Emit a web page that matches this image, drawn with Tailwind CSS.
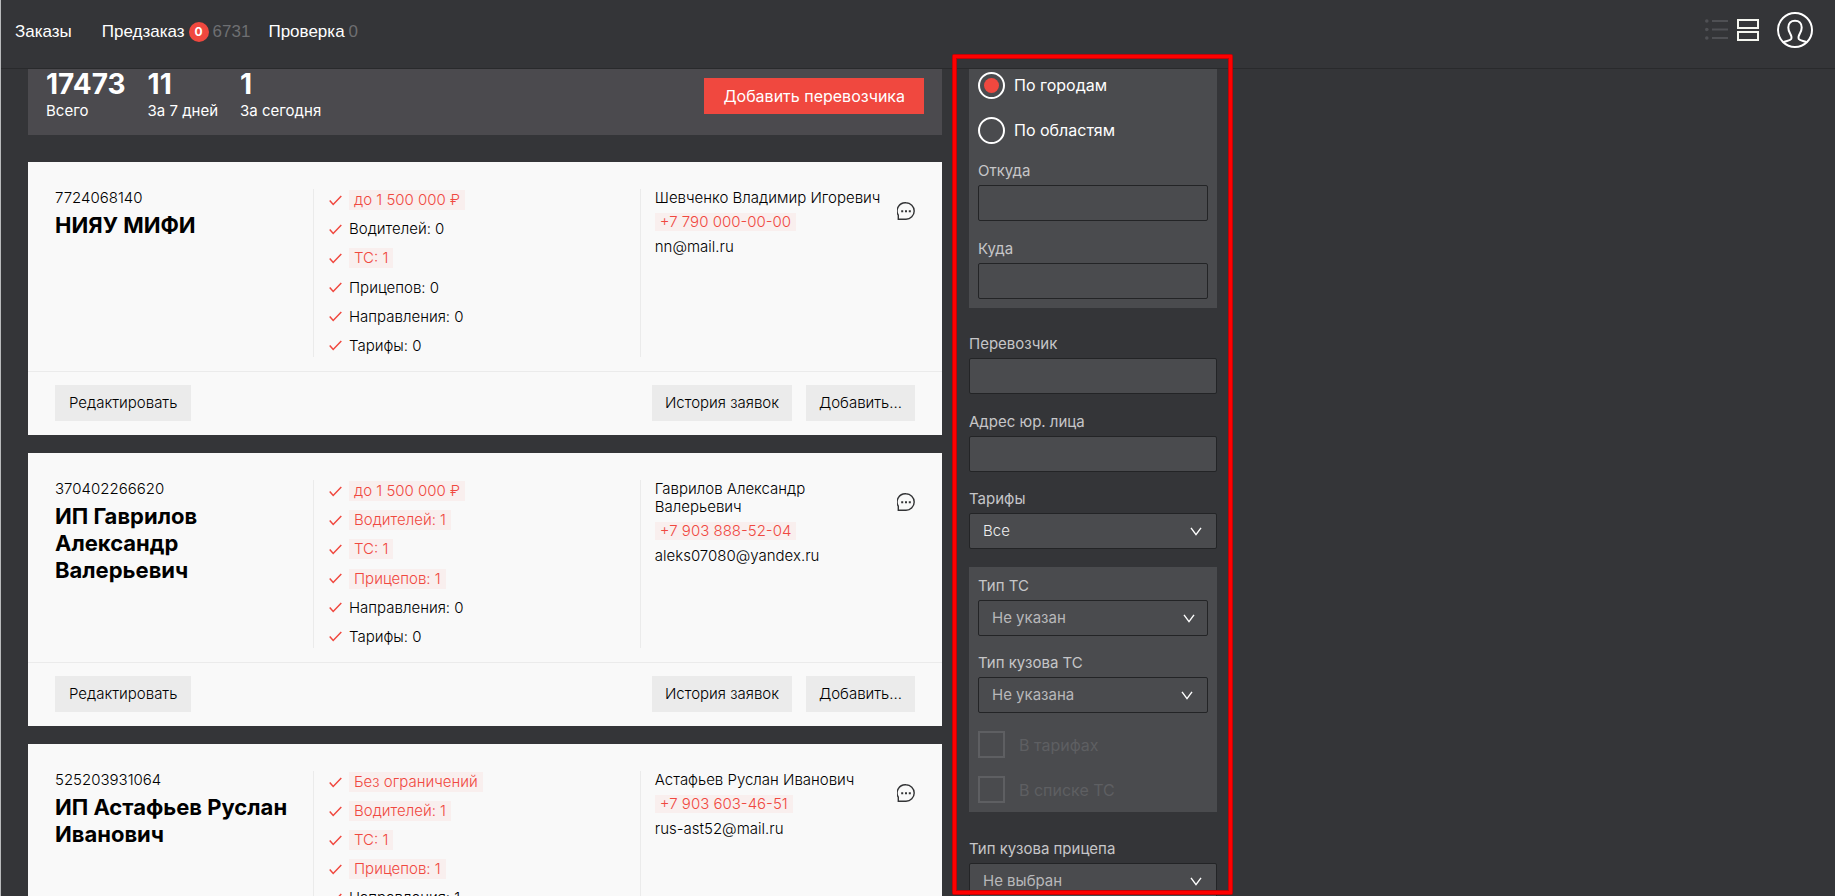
<!DOCTYPE html>
<html lang="ru">
<head>
<meta charset="utf-8">
<meta name="viewport" content="width=device-width, initial-scale=1">
<title>Перевозчики</title>
<script src="https://cdn.jsdelivr.net/npm/@tailwindcss/browser@4"></script>
</head>
<body class="bg-[#343538]">
<svg class="hidden" aria-hidden="true">
  <symbol id="check" viewBox="0 0 13 11"><path d="M.7 5.4 4.2 9.5 12.3 1" fill="none" stroke="#f0483f" stroke-width="1.5"/></symbol>
  <symbol id="chat" viewBox="0 0 18 18"><path d="M9 .8A8.2 8.2 0 1 1 9 17.2H1.3V13.2A8.2 8.2 0 0 1 9 .8Z" fill="none" stroke="#333436" stroke-width="1.4"/><path d="M4.2 8.2h2v2h-2zM8 8.2h2v2H8zM11.8 8.2h2v2h-2z" fill="#333436"/></symbol>
  <symbol id="chevron" viewBox="0 0 12 9"><path d="M1 .8 6 7.6 11 .8" fill="none" stroke="#fff" stroke-width="1.4"/></symbol>
</svg>
<div class="flex h-screen flex-col overflow-hidden border-l border-[#b9babc] font-['Inter',sans-serif] text-[15px] leading-[18px] font-light text-black">

  <header class="flex h-[69px] shrink-0 items-center justify-between border-b border-[#292a2c] pr-[22px] pb-[8px] pl-[14px] font-['Liberation_Sans',sans-serif] text-[17px] font-normal text-white">
    <nav class="flex items-center pt-[3px]">
      <a href="#" class="mr-[30px]">Заказы</a>
      <a href="#" class="mr-[18px] flex items-center gap-[4px]">Предзаказ
        <span class="flex size-5 items-center justify-center rounded-full bg-[#f0483f] font-['Inter',sans-serif] text-xs font-bold">0</span>
        <span class="text-[#6e6f72]">6731</span></a>
      <a href="#" class="flex items-center gap-[4px]">Проверка <span class="text-[#6e6f72]">0</span></a>
    </nav>
    <div class="flex items-center">
      <button type="button" aria-label="Список" class="mr-[9px]"><svg class="block h-[22px] w-[23px]" viewBox="0 0 23 22" fill="none" stroke="#4f5054" stroke-width="2"><path d="M7 2H23M7 10.5H23M7 19H23"/><g fill="#4f5054" stroke="none"><circle cx="1.8" cy="2" r="1.8"/><circle cx="1.8" cy="10.5" r="1.8"/><circle cx="1.8" cy="19" r="1.8"/></g></svg></button>
      <button type="button" aria-label="Карточки" class="mr-[18px]"><svg class="block size-[22px]" viewBox="0 0 22 22" fill="none" stroke="#f4f5ef" stroke-width="2"><path d="M1 1H21V9H1zM1 13H21V21H1z"/></svg></button>
      <button type="button" aria-label="Профиль"><svg class="block size-9" viewBox="0 0 36 36" fill="none" stroke="#fff" stroke-width="2"><circle cx="18" cy="18" r="17"/><path d="M6 30.5C8.5 28.8 13 29 14.2 27 15 25.5 14.2 23.4 13 21.3 11.8 19.2 11.3 17.5 11.3 15.5 11.3 11.3 14 8.7 18 8.7S24.700 11.3 24.700 15.5C24.700 17.5 24.200 19.200 23 21.300 21.800 23.400 21 25.500 21.800 27 23 29 27.500 28.800 30 30.500"/></svg></button>
    </div>
  </header>

  <div class="grid min-h-0 flex-1 grid-cols-[minmax(0,914fr)_248px_minmax(0,591fr)] grid-rows-[minmax(0,1fr)] gap-x-[27px] pl-[27px]">
    <main class="flex flex-col overflow-hidden">
      <section class="mb-[27px] flex shrink-0 items-start justify-between bg-[#4b4a4e] pt-px pr-[18px] pb-[15px] pl-[18px] font-normal text-white">
        <dl class="flex gap-[22px]">
          <div class="flex flex-col-reverse gap-1"><dt>Всего</dt><dd class="text-[28px] leading-7 font-bold">17473</dd></div>
          <div class="flex flex-col-reverse gap-1"><dt>За 7 дней</dt><dd class="text-[28px] leading-7 font-bold">11</dd></div>
          <div class="flex flex-col-reverse gap-1"><dt>За сегодня</dt><dd class="text-[28px] leading-7 font-bold">1</dd></div>
        </dl>
        <button type="button" class="mt-2 h-9 bg-[#f0483f] px-[19px] text-base">Добавить перевозчика</button>
      </section>

      <div class="flex shrink-0 flex-col gap-[18px]">
        <article class="bg-[#f9f9f9]">
          <div class="flex px-[27px] pt-[27px] pb-[14px]">
            <div class="w-[30%] pr-3"><p>7724068140</p><h2 class="mt-[5px] text-[22px] leading-[27px] font-bold">НИЯУ МИФИ</h2></div>
            <ul class="flex min-h-[168px] w-[38%] flex-col justify-between border-l border-[#ebebeb] py-px pl-[15px]">
              <li class="flex h-5 items-center gap-[7px]"><svg class="h-[11px] w-[13px]"><use href="#check"/></svg><span class="bg-[#f9efee] px-[5px] py-px text-[#f0483f]">до 1 500 000 ₽</span></li>
              <li class="flex h-5 items-center gap-[7px]"><svg class="h-[11px] w-[13px]"><use href="#check"/></svg>Водителей: 0</li>
              <li class="flex h-5 items-center gap-[7px]"><svg class="h-[11px] w-[13px]"><use href="#check"/></svg><span class="bg-[#f9efee] px-[5px] py-px text-[#f0483f]">ТС: 1</span></li>
              <li class="flex h-5 items-center gap-[7px]"><svg class="h-[11px] w-[13px]"><use href="#check"/></svg>Прицепов: 0</li>
              <li class="flex h-5 items-center gap-[7px]"><svg class="h-[11px] w-[13px]"><use href="#check"/></svg>Направления: 0</li>
              <li class="flex h-5 items-center gap-[7px]"><svg class="h-[11px] w-[13px]"><use href="#check"/></svg>Тарифы: 0</li>
            </ul>
            <div class="flex w-[32%] items-start justify-between gap-3 border-l border-[#ebebeb] pl-[14px]">
              <div><p>Шевченко Владимир Игоревич</p><a href="tel:+77900000000" class="mt-[6px] mb-[7px] block w-fit bg-[#f9efee] px-[5px] text-[#f0483f]">+7 790 000-00-00</a><p>nn@mail.ru</p></div>
              <button type="button" aria-label="Комментарии" class="mt-[13px] shrink-0"><svg class="block size-[18px]"><use href="#chat"/></svg></button>
            </div>
          </div>
          <footer class="flex gap-[14px] border-t border-[#ebebeb] px-[27px] pt-[13px] pb-[14px]">
            <button type="button" class="mr-auto h-9 bg-[#ebebeb] px-[14px]">Редактировать</button>
            <button type="button" class="h-9 bg-[#ebebeb] px-[13px]">История заявок</button>
            <button type="button" class="h-9 bg-[#ebebeb] px-[13px]">Добавить...</button>
          </footer>
        </article>

        <article class="bg-[#f9f9f9]">
          <div class="flex px-[27px] pt-[27px] pb-[14px]">
            <div class="w-[30%] pr-3"><p>370402266620</p><h2 class="mt-[5px] text-[22px] leading-[27px] font-bold">ИП Гаврилов Александр Валерьевич</h2></div>
            <ul class="flex min-h-[168px] w-[38%] flex-col justify-between border-l border-[#ebebeb] py-px pl-[15px]">
              <li class="flex h-5 items-center gap-[7px]"><svg class="h-[11px] w-[13px]"><use href="#check"/></svg><span class="bg-[#f9efee] px-[5px] py-px text-[#f0483f]">до 1 500 000 ₽</span></li>
              <li class="flex h-5 items-center gap-[7px]"><svg class="h-[11px] w-[13px]"><use href="#check"/></svg><span class="bg-[#f9efee] px-[5px] py-px text-[#f0483f]">Водителей: 1</span></li>
              <li class="flex h-5 items-center gap-[7px]"><svg class="h-[11px] w-[13px]"><use href="#check"/></svg><span class="bg-[#f9efee] px-[5px] py-px text-[#f0483f]">ТС: 1</span></li>
              <li class="flex h-5 items-center gap-[7px]"><svg class="h-[11px] w-[13px]"><use href="#check"/></svg><span class="bg-[#f9efee] px-[5px] py-px text-[#f0483f]">Прицепов: 1</span></li>
              <li class="flex h-5 items-center gap-[7px]"><svg class="h-[11px] w-[13px]"><use href="#check"/></svg>Направления: 0</li>
              <li class="flex h-5 items-center gap-[7px]"><svg class="h-[11px] w-[13px]"><use href="#check"/></svg>Тарифы: 0</li>
            </ul>
            <div class="flex w-[32%] items-start justify-between gap-3 border-l border-[#ebebeb] pl-[14px]">
              <div><p>Гаврилов Александр Валерьевич</p><a href="tel:+79038885204" class="mt-[6px] mb-[7px] block w-fit bg-[#f9efee] px-[5px] text-[#f0483f]">+7 903 888-52-04</a><p>aleks07080@yandex.ru</p></div>
              <button type="button" aria-label="Комментарии" class="mt-[13px] shrink-0"><svg class="block size-[18px]"><use href="#chat"/></svg></button>
            </div>
          </div>
          <footer class="flex gap-[14px] border-t border-[#ebebeb] px-[27px] pt-[13px] pb-[14px]">
            <button type="button" class="mr-auto h-9 bg-[#ebebeb] px-[14px]">Редактировать</button>
            <button type="button" class="h-9 bg-[#ebebeb] px-[13px]">История заявок</button>
            <button type="button" class="h-9 bg-[#ebebeb] px-[13px]">Добавить...</button>
          </footer>
        </article>

        <article class="bg-[#f9f9f9]">
          <div class="flex px-[27px] pt-[27px] pb-[14px]">
            <div class="w-[30%] pr-3"><p>525203931064</p><h2 class="mt-[5px] text-[22px] leading-[27px] font-bold">ИП Астафьев Руслан Иванович</h2></div>
            <ul class="flex w-[38%] flex-col gap-[9px] border-l border-[#ebebeb] py-px pl-[15px]">
              <li class="flex h-5 items-center gap-[7px]"><svg class="h-[11px] w-[13px]"><use href="#check"/></svg><span class="bg-[#f9efee] px-[5px] py-px text-[#f0483f]">Без ограничений</span></li>
              <li class="flex h-5 items-center gap-[7px]"><svg class="h-[11px] w-[13px]"><use href="#check"/></svg><span class="bg-[#f9efee] px-[5px] py-px text-[#f0483f]">Водителей: 1</span></li>
              <li class="flex h-5 items-center gap-[7px]"><svg class="h-[11px] w-[13px]"><use href="#check"/></svg><span class="bg-[#f9efee] px-[5px] py-px text-[#f0483f]">ТС: 1</span></li>
              <li class="flex h-5 items-center gap-[7px]"><svg class="h-[11px] w-[13px]"><use href="#check"/></svg><span class="bg-[#f9efee] px-[5px] py-px text-[#f0483f]">Прицепов: 1</span></li>
              <li class="flex h-5 items-center gap-[7px]"><svg class="h-[11px] w-[13px]"><use href="#check"/></svg>Направления: 1</li>
            </ul>
            <div class="flex w-[32%] items-start justify-between gap-3 border-l border-[#ebebeb] pl-[14px]">
              <div><p>Астафьев Руслан Иванович</p><a href="tel:+79036034651" class="mt-[6px] mb-[7px] block w-fit bg-[#f9efee] px-[5px] text-[#f0483f]">+7 903 603-46-51</a><p>rus-ast52@mail.ru</p></div>
              <button type="button" aria-label="Комментарии" class="mt-[13px] shrink-0"><svg class="block size-[18px]"><use href="#chat"/></svg></button>
            </div>
          </div>
        </article>
      </div>
    </main>

    <aside class="relative">
      <form class="h-full overflow-hidden font-normal text-[#c6c6c8]">
        <div class="mb-[26px] bg-[#4a4b4e] px-[9px] pt-[3px] pb-[9px]">
          <label class="mb-[18px] flex items-center gap-[9px] text-base leading-5 text-white"><input type="radio" name="area" checked class="size-[27px] shrink-0 appearance-none rounded-full border-2 border-white bg-clip-content p-[4px] checked:bg-[#f0483f]"><span class="pb-[2px]">По городам</span></label>
          <label class="mb-[17px] flex items-center gap-[9px] text-base leading-5 text-white"><input type="radio" name="area" class="size-[27px] shrink-0 appearance-none rounded-full border-2 border-white bg-clip-content p-[4px] checked:bg-[#f0483f]"><span class="pb-[2px]">По областям</span></label>
          <label for="from" class="block h-6 leading-5">Откуда</label>
          <input id="from" type="text" class="mb-[18px] block h-9 w-full rounded-xs border border-[#232426] bg-[#4a4b4e] px-[13px] text-white">
          <label for="to" class="block h-6 leading-5">Куда</label>
          <input id="to" type="text" class="block h-9 w-full rounded-xs border border-[#232426] bg-[#4a4b4e] px-[13px] text-white">
        </div>
        <label for="carrier" class="block h-6 leading-5">Перевозчик</label>
        <input id="carrier" type="text" class="mb-[18px] block h-9 w-full rounded-xs border border-[#232426] bg-[#4a4b4e] px-[13px] text-white">
        <label for="address" class="block h-6 leading-5">Адрес юр. лица</label>
        <input id="address" type="text" class="mb-[17px] block h-9 w-full rounded-xs border border-[#232426] bg-[#4a4b4e] px-[13px] text-white">
        <label for="tariffs" class="block h-6 leading-5">Тарифы</label>
        <div class="relative mb-[18px]">
          <select id="tariffs" class="block h-9 w-full appearance-none rounded-xs border border-[#232426] bg-[#4a4b4e] px-[13px] font-light text-[#eeeeee]"><option>Все</option></select>
          <svg class="pointer-events-none absolute top-[14px] right-[15px] h-[9px] w-3"><use href="#chevron"/></svg>
        </div>
        <div class="mb-[27px] bg-[#4a4b4e] p-[9px]">
          <label for="vehicle" class="block h-6 leading-5">Тип ТС</label>
          <div class="relative mb-[17px]">
            <select id="vehicle" class="block h-9 w-full appearance-none rounded-xs border border-[#232426] bg-[#4a4b4e] px-[13px] text-[#b8b8ba]"><option>Не указан</option></select>
            <svg class="pointer-events-none absolute top-[14px] right-[13px] h-[9px] w-3"><use href="#chevron"/></svg>
          </div>
          <label for="body" class="block h-6 leading-5">Тип кузова ТС</label>
          <div class="relative mb-[18px]">
            <select id="body" class="block h-9 w-full appearance-none rounded-xs border border-[#232426] bg-[#4a4b4e] px-[13px] text-[#b8b8ba]"><option>Не указана</option></select>
            <svg class="pointer-events-none absolute top-[14px] right-[15px] h-[9px] w-3"><use href="#chevron"/></svg>
          </div>
          <label class="mb-[18px] flex items-center gap-[14px] text-base leading-5 text-[#5e5f62]"><input type="checkbox" disabled class="size-[27px] shrink-0 appearance-none border-2 border-[#5e5f62]">В тарифах</label>
          <label class="flex items-center gap-[14px] text-base leading-5 text-[#5e5f62]"><input type="checkbox" disabled class="size-[27px] shrink-0 appearance-none border-2 border-[#5e5f62]">В списке ТС</label>
        </div>
        <label for="trailer" class="block h-6 leading-5">Тип кузова прицепа</label>
        <div class="relative">
          <select id="trailer" class="block h-9 w-full appearance-none rounded-xs border border-[#232426] bg-[#4a4b4e] px-[13px] text-[#b8b8ba]"><option>Не выбран</option></select>
          <svg class="pointer-events-none absolute top-[14px] right-[15px] h-[9px] w-3"><use href="#chevron"/></svg>
        </div>
      </form>
      <div class="pointer-events-none absolute -top-[15px] -right-[16px] bottom-px -left-[17px] rounded-xs border-5 border-[#c00407]"></div>
      <div class="pointer-events-none absolute -top-[14px] -right-[15px] bottom-[2px] -left-[16px] border-3 border-[#ff0000]"></div>
    </aside>
  </div>
</div>
</body>
</html>
